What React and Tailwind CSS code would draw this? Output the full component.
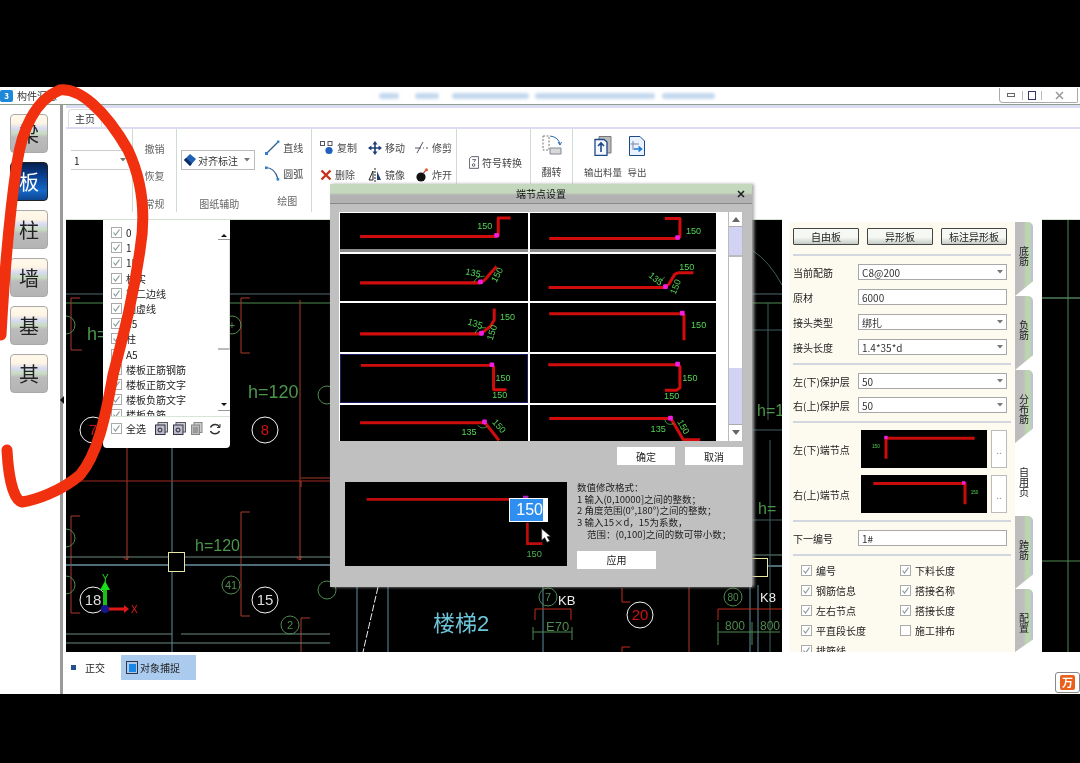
import React from "react";

const FONT = "[font-family:'Noto_Sans_CJK_SC','Liberation_Sans',sans-serif]";

function Tick({ on = true, cls = "" }) {
  return (
    <span className={`inline-flex h-[11px] w-[11px] shrink-0 items-center justify-center border border-[#aaa] bg-white ${cls}`}>
      {on && (
        <svg width="9" height="9" viewBox="0 0 9 9" fill="none">
          <path d="M1.5 4.5 L3.5 7 L7.5 1.5" stroke="#8a9a9a" strokeWidth="1.2" />
        </svg>
      )}
    </span>
  );
}

function Caret({ color = "#777" }) {
  return (
    <svg width="6" height="4" viewBox="0 0 6 4" className="shrink-0">
      <path d="M0 0 H6 L3 3.5 Z" fill={color} />
    </svg>
  );
}

const GREEN = "#55d655";

function Bar({ pts, w = 9 }) {
  return <polyline points={pts} fill="none" stroke="#d00c0c" strokeWidth={w} strokeLinejoin="round" />;
}
function Dot({ x, y, s = 14 }) {
  return <rect x={x - s / 2} y={y - s / 2} width={s} height={s} rx="3" fill="#f01ee0" />;
}
function Num({ x, y, r, t = "150", s = 27 }) {
  return (
    <text x={x} y={y} fontSize={s} fill={GREEN} fontFamily="'Liberation Sans',sans-serif" transform={r ? `rotate(${r} ${x} ${y})` : undefined}>
      {t}
    </text>
  );
}

const CELLS = [
  { vb: "30 40 562 110", pts: "90,112 498,112 503,108 503,55 540,55", dot: [498, 108], nums: [{ x: 440, y: 90 }] },
  { vb: "600 40 555 110", pts: "657,118 1040,118 1045,112 1045,57 1000,57", dot: [1038, 115], nums: [{ x: 1063, y: 105 }] },
  { vb: "30 160 562 140", pts: "90,246 445,246 460,240 498,197", dot: [450, 243], nums: [{ x: 404, y: 220, r: 12, t: "135" }, { x: 497, y: 246, r: -62 }], arc: "M430,244 Q438,226 462,226" },
  { vb: "600 160 555 140", pts: "655,260 1000,260 1012,250 1030,220 1040,216 1085,216", dot: [1002, 257], nums: [{ x: 1043, y: 208 }, { x: 950, y: 226, r: 40, t: "135" }, { x: 1032, y: 282, r: -68 }], arc: "M985,254 Q985,240 1000,228" },
  { vb: "30 311 562 141", pts: "90,400 450,400 480,378 491,360 491,327", dot: [453, 398], nums: [{ x: 508, y: 361 }, { x: 410, y: 372, r: 18, t: "135" }, { x: 486, y: 420, r: -72 }], arc: "M434,398 Q440,380 466,382" },
  { vb: "600 311 555 141", pts: "657,342 1050,342 1057,345 1057,418", dot: [1052, 340], nums: [{ x: 1078, y: 384 }] },
  { vb: "30 460 562 145", sel: true, pts: "90,492 485,492 491,497 491,567 530,567", dot: [486, 490], nums: [{ x: 497, y: 540 }, { x: 487, y: 594 }] },
  { vb: "600 460 555 145", pts: "654,492 1038,492 1045,497 1045,560 1035,567 1000,567", dot: [1038, 490], nums: [{ x: 1052, y: 540 }, { x: 998, y: 594 }] },
  { vb: "30 612 562 107", pts: "90,665 460,665 468,670 505,717", dot: [462, 662], nums: [{ x: 393, y: 702, t: "135" }, { x: 484, y: 664, r: 48 }], arc: "M442,672 Q452,686 470,676" },
  { vb: "600 612 555 107", pts: "657,652 1015,652 1020,655 1055,715 1105,715", dot: [1017, 651], nums: [{ x: 958, y: 692, t: "135" }, { x: 1036, y: 662, r: 60 }], arc: "M1000,656 Q1004,674 1026,668" },
];

function Cell({ c, first }) {
  return (
    <div className={`bg-black ${c.sel ? "border border-[#1a1a6a]" : ""} ${first ? "border-b-[3px] border-b-[#8c8c8c]" : ""}`}>
      <svg viewBox={c.vb} preserveAspectRatio="none" className="block h-full w-full">
        <Bar pts={c.pts} />
        {c.arc && <path d={c.arc} fill="none" stroke={GREEN} strokeWidth="2" />}
        <Dot x={c.dot[0]} y={c.dot[1]} />
        {c.nums.map((n, i) => (
          <Num key={i} {...n} />
        ))}
      </svg>
    </div>
  );
}

function ScrollBar() {
  return (
    <div className="flex h-full w-[15px] flex-col border-x border-[#bbb] bg-white">
      <div className="flex h-[15px] items-center justify-center border-b border-[#aaa] bg-white">
        <svg width="8" height="5" viewBox="0 0 8 5"><path d="M0 5 L4 0 L8 5 Z" fill="#666" /></svg>
      </div>
      <div className="h-[30px] border-b-2 border-b-[#bbb] bg-[#d2d2f4]" />
      <div className="h-[111px] bg-white" />
      <div className="h-[56px] bg-[#d2d2f4]" />
      <div className="flex h-[15px] items-center justify-center border-t border-[#aaa] bg-white">
        <svg width="8" height="5" viewBox="0 0 8 5"><path d="M0 0 L4 5 L8 0 Z" fill="#666" /></svg>
      </div>
    </div>
  );
}

function DlgBtn({ children, cls = "w-[58px]" }) {
  return (
    <div className={`flex h-[18px] items-center justify-center bg-white text-[10px] text-[#222] ${cls}`}>{children}</div>
  );
}

function Dialog() {
  return (
    <div className={`absolute left-[330px] top-[184px] flex h-[403px] w-[422px] flex-col bg-[#c0c0c0] shadow-[2px_0_3px_#aaa] ${FONT}`}>
      <div className="relative flex h-[20px] shrink-0 items-center justify-center border-b border-[#888] bg-[linear-gradient(#c3d8bc_0%,#c3d8bc_45%,#b2b2b2_60%,#b2b2b2_100%)] text-[10px] text-[#111]">
        端节点设置
        <svg width="8" height="8" viewBox="0 0 8 8" className="absolute right-[7px] top-[6px]">
          <path d="M1 1 L7 7 M7 1 L1 7" stroke="#222" strokeWidth="1.6" />
        </svg>
      </div>
      <div className="ml-[9px] mt-[8px] flex h-[229px] w-[404px] shrink-0 bg-white">
        <div className="grid h-full w-[377px] grid-cols-[188px_187px] grid-rows-[39px_47px_49px_49px_36px] gap-x-[2px] gap-y-[2px] overflow-hidden p-px">
          {CELLS.map((c, i) => (
            <Cell key={i} c={c} first={i < 2} />
          ))}
        </div>
        <div className="w-[12px]" />
        <ScrollBar />
      </div>
      <div className="mt-[6px] flex shrink-0 justify-end gap-[10px] pr-[9px]">
        <DlgBtn>确定</DlgBtn>
        <DlgBtn>取消</DlgBtn>
      </div>
      <div className="mt-[17px] flex pl-[15px]">
        <div className="relative h-[84px] w-[222px] shrink-0 bg-black">
          <svg viewBox="45 125 667 252" className="block h-full w-full">
            <polyline points="110,177 540,177" stroke="#c00c0c" strokeWidth="8" fill="none" />
            <polyline points="593,247 593,310 638,310" stroke="#c00c0c" strokeWidth="8" fill="none" />
            <rect x="580" y="166" width="16" height="10" fill="#b020c0" />
            <text x="590" y="350" fontSize="28" fill="#4fae4f" fontFamily="'Liberation Sans',sans-serif">150</text>
            <path d="M636,265 L636,300 L645,292 L652,306 L660,302 L652,289 L662,288 Z" fill="#fff" stroke="#333" strokeWidth="2" />
          </svg>
          <div className="absolute left-[164px] top-[16px] flex h-[24px] w-[39px] items-center bg-white pl-[1px]">
            <span className="flex h-[22px] w-[33px] items-center justify-end bg-[#2f8ff0] text-[16px] text-white [font-family:'Liberation_Sans',sans-serif]">150</span>
          </div>
        </div>
        <div className="ml-[10px] flex flex-col text-[9.5px] leading-[11.7px] text-[#222]">
          <span>数值修改格式：</span>
          <span>1 输入(0,10000]之间的整数；</span>
          <span>2 角度范围(0°,180°)之间的整数；</span>
          <span>3 输入15×d，15为系数，</span>
          <span className="pl-[10px]">范围：(0,100]之间的数可带小数；</span>
          <DlgBtn cls="mt-[10px] w-[79px]">应用</DlgBtn>
        </div>
      </div>
    </div>
  );
}

function SideBtn({ t, active }) {
  return (
    <div
      className={`flex h-[39px] w-[38px] items-center justify-center rounded-[4px] border text-[20px] leading-none ${
        active
          ? "border-[#222] bg-[linear-gradient(#06204c_0%,#0a3f92_35%,#1468c8_75%,#0e4590_100%)] text-white"
          : "border-[#aaa] bg-[linear-gradient(#fff8ea_0%,#fff5e4_22%,#d8daf2_36%,#c8dcc0_50%,#bcbcbc_60%,#b4b4b4_100%)] text-[#222]"
      }`}
    >
      {t}
    </div>
  );
}

function Group({ w, children, last }) {
  return <div className={`${w} h-[83px] shrink-0 ${last ? "" : "border-r border-[#cfdccf]"}`}>{children}</div>;
}

function Row({ icon, t, cls = "" }) {
  return (
    <div className={`flex h-[27px] items-center gap-[3px] whitespace-nowrap ${cls}`}>
      {icon}
      <span>{t}</span>
    </div>
  );
}

const Ico = {
  copy: (
    <svg width="14" height="14" viewBox="0 0 14 14" fill="none">
      <rect x="0.5" y="0.5" width="4" height="4" stroke="#556" />
      <rect x="8" y="0.5" width="4" height="4" stroke="#556" />
      <circle cx="9" cy="9.5" r="3.6" fill="#1f5fc0" />
    </svg>
  ),
  move: (
    <svg width="14" height="14" viewBox="0 0 14 14" fill="#1c3e72">
      <path d="M7 0 L9.5 3.4 H7.8 V6.2 H10.6 V4.5 L14 7 L10.6 9.5 V7.8 H7.8 V10.6 H9.5 L7 14 L4.5 10.6 H6.2 V7.8 H3.4 V9.5 L0 7 L3.4 4.5 V6.2 H6.2 V3.4 H4.5 Z" />
    </svg>
  ),
  trim: (
    <svg width="14" height="14" viewBox="0 0 14 14" fill="none" stroke="#556">
      <path d="M2 12 L8 1" />
      <path d="M0 7 H6" />
      <path d="M8 7 H9 M11 7 H13" />
    </svg>
  ),
  del: (
    <svg width="12" height="12" viewBox="0 0 12 12">
      <path d="M1.5 1.5 L10.5 10.5 M10.5 1.5 L1.5 10.5" stroke="#c8321e" strokeWidth="2.4" />
    </svg>
  ),
  mirror: (
    <svg width="14" height="14" viewBox="0 0 14 14" fill="none">
      <path d="M1 12 L5 3 V12 Z" stroke="#222" />
      <path d="M9 3 L13 12 H9 Z" fill="#1c3e72" />
      <path d="M7 0 V14" stroke="#222" strokeDasharray="2 1" />
    </svg>
  ),
  bomb: (
    <svg width="14" height="14" viewBox="0 0 14 14">
      <circle cx="6" cy="9" r="4.6" fill="#111" />
      <path d="M8.5 5 L11 2" stroke="#b46" strokeWidth="1.2" />
      <circle cx="11.5" cy="1.8" r="1.5" fill="#e05a20" />
    </svg>
  ),
  line: (
    <svg width="15" height="15" viewBox="0 0 15 15">
      <path d="M1.5 13.5 L13 2" stroke="#2a5a8a" strokeWidth="1.2" />
      <rect x="0" y="12" width="3" height="3" fill="#2f7fd0" />
      <rect x="12" y="0.5" width="2.4" height="2.4" fill="#2f7fd0" />
    </svg>
  ),
  arc: (
    <svg width="15" height="15" viewBox="0 0 15 15" fill="none">
      <path d="M1 1.5 Q10 2 13 13" stroke="#2a5a8a" strokeWidth="1.2" />
      <rect x="0" y="0.5" width="2.6" height="2.6" fill="#2f7fd0" />
      <rect x="11.6" y="12" width="2.6" height="2.6" fill="#2f7fd0" />
    </svg>
  ),
  sym: (
    <svg width="10" height="15" viewBox="0 0 12 15" fill="none" stroke="#445">
      <path d="M3 0.5 H11.5 V14.5 H0.5 V3 Z" />
      <circle cx="5.5" cy="10.5" r="1.6" />
      <path d="M4 4 H8 L6 7" />
    </svg>
  ),
  flip: (
    <svg width="20" height="20" viewBox="0 0 20 20" fill="none" stroke="#2b6cb0">
      <path d="M1 1 H7 V15 H1 Z" strokeDasharray="2 1.5" stroke="#777" />
      <path d="M8 1 Q17 2 18 10 M18 10 L16 7 M18 10 L19.5 7" />
      <path d="M8 13 H19 V19 H8 Z" fill="#d8d8d8" stroke="#889" />
    </svg>
  ),
  out: (
    <svg width="18" height="20" viewBox="0 0 18 20">
      <path d="M5 0.5 H17 V17 H5 Z" fill="#bbb" stroke="#777" />
      <path d="M1 3.5 H10 L13 6 V19.5 H1 Z" fill="#f6f8ff" stroke="#1c4a86" strokeWidth="1.3" />
      <path d="M7 7 V16 M4 10 L7 7 L10 10" fill="none" stroke="#1c4a86" strokeWidth="1.6" />
    </svg>
  ),
  exp: (
    <svg width="16" height="20" viewBox="0 0 16 20">
      <path d="M0.5 0.5 H11 L15.5 5 V19.5 H0.5 Z" fill="#eaf2ff" stroke="#1c4a86" />
      <path d="M4 5 V14 M1.5 8 H10" stroke="#7a8aa0" />
      <path d="M5 13 H12 M9.5 10.5 L12.5 13 L9.5 15.5" fill="none" stroke="#1c7ad0" strokeWidth="1.6" />
    </svg>
  ),
};

function Ribbon() {
  return (
    <div className="flex h-[115px] shrink-0 flex-col border-b border-[#d4e2d0] bg-white text-[10px] text-[#4a4a4a]">
      <div className="h-[3px] shrink-0 bg-[#dcdcf4]" />
      <div className="flex h-[21px] shrink-0 items-end border-b-[2px] border-b-[#dcdcf4]">
        <div className="ml-[2px] flex h-[18px] w-[34px] items-center justify-center rounded-t border border-b-0 border-[#ddd] text-[#333]">主页</div>
      </div>
      <div className="flex h-[85px]">
        <Group w="w-[67px]">
          <div className="ml-[5px] mt-[21px] flex h-[20px] w-[58px] items-center justify-between border-y border-[#ccc] pl-[3px] pr-[3px] text-[#222]">
            1<Caret />
          </div>
        </Group>
        <Group w="w-[44px]">
          <div className="flex flex-col items-center pt-[6px] text-[#666]">
            <div className="flex h-[27px] items-center">撤销</div>
            <div className="flex h-[27px] items-center">恢复</div>
            <div className="mt-[2px] flex h-[24px] items-center whitespace-nowrap">常规</div>
          </div>
        </Group>
        <Group w="w-[135px]">
          <div className="flex h-full">
            <div className="w-[85px]">
              <div className="ml-[4px] mt-[21px] flex h-[20px] w-[74px] items-center gap-[2px] border border-[#bbb] pl-[2px] pr-[4px] text-[#333]">
                <svg width="12" height="12" viewBox="0 0 12 12" className="shrink-0">
                  <path d="M6 0 L12 5 L6 12 L0 6 Z" fill="#1f5fb4" />
                  <path d="M0 6 L6 12 L8 9.5 L2 4 Z" fill="#0c2c60" />
                </svg>
                <span className="whitespace-nowrap">对齐标注</span>
                <span className="ml-auto"><Caret /></span>
              </div>
              <div className="mt-[26px] text-center text-[#666]">图纸辅助</div>
            </div>
            <div className="flex w-[50px] flex-col pl-[4px] pt-[6px]">
              <Row icon={Ico.line} t="直线" />
              <Row icon={Ico.arc} t="圆弧" />
              <div className="mt-[2px] flex h-[24px] items-center pl-[12px] text-[#666]">绘图</div>
            </div>
          </div>
        </Group>
        <Group w="w-[145px]">
          <div className="grid grid-cols-[48px_47px_47px] pl-[8px] pt-[5px]">
            <Row icon={Ico.copy} t="复制" />
            <Row icon={Ico.move} t="移动" />
            <Row icon={Ico.trim} t="修剪" />
            <Row icon={Ico.del} t="删除" />
            <Row icon={Ico.mirror} t="镜像" />
            <Row icon={Ico.bomb} t="炸开" />
          </div>
        </Group>
        <Group w="w-[74px]">
          <div className="flex h-full items-start pl-[12px] pt-[20px]">
            <Row icon={Ico.sym} t="符号转换" cls="text-[#444]" />
          </div>
        </Group>
        <Group w="w-[42px]">
          <div className="flex flex-col items-center pt-[6px]">
            {Ico.flip}
            <span className="mt-[9px]">翻转</span>
          </div>
        </Group>
        <Group w="w-[90px]" last>
          <div className="flex pl-[8px] pt-[7px] text-[9.5px]">
            <div className="flex w-[44px] flex-col items-center">
              {Ico.out}
              <span className="mt-[9px] whitespace-nowrap">输出料量</span>
            </div>
            <div className="flex w-[24px] flex-col items-center">
              {Ico.exp}
              <span className="mt-[9px] whitespace-nowrap">导出</span>
            </div>
          </div>
        </Group>
      </div>
    </div>
  );
}

function Ci({ x, y, r = 13, c = "#f4f4f4", t, tc = "#d01010", s = 15 }) {
  return (
    <g>
      <circle cx={x} cy={y} r={r} fill="none" stroke={c} strokeWidth="1" />
      {t && (
        <text x={x} y={y + s * 0.36} fontSize={s} fill={tc} textAnchor="middle" fontFamily="'Liberation Sans',sans-serif">
          {t}
        </text>
      )}
    </g>
  );
}
function Lab({ x, y, t, c = "#4c964c", s = 17 }) {
  return (
    <text x={x} y={y} fontSize={s} fill={c} fontFamily="'Liberation Sans','Noto Sans CJK SC',sans-serif">
      {t}
    </text>
  );
}

function Cad() {
  const R = "#a83a2a";
  const T = "#5c8ea0";
  const G = "#4f8a4f";
  const W = "#6a8a80";
  return (
    <svg viewBox="66 220 1014 432" className="block h-[432px] w-[1014px]" fill="none">
      <path d="M66 294 H782 M1042 298 H1080" stroke="#4a6a70" />
      <path d="M66 303 H782 M1042 298 H1080 M1042 561 H1080" stroke={G} />
      <path d="M1068 220 V652" stroke={G} />
      <path d="M172 220 V652 M357 585 V652 M388 585 V652 M543 585 V652 M750 585 V652 M758 585 V652" stroke={T} />
      <path d="M80 298 H71 V350 H82 M250 298 H241 V353 H250 M300 300 V560 M127 447 V560" stroke={R} />
      <path d="M66 481 H330" stroke="#a02a20" />
      <path d="M301 481 V487 M301 478 H330" stroke={R} />
      <path d="M250 512 H241 V616 H250 M71 516 H80 M71 516 V613 H80 M310 618 H301 V652" stroke={R} />
      <path d="M66 557 H330 M66 634 H172 M181 634 H330 M66 643 H330 M752 555 H782" stroke={W} />
      <path d="M66 565 H330 M752 566 H782" stroke="#516a78" strokeWidth="2" />
      <path d="M123 557 L127 560 L129 556 M296 557 L300 560 L302 556" stroke={R} />
      <path d="M752 250 Q770 262 782 285 M752 330 H782 M768 303 V420 M752 430 H782 M770 440 V652 M752 520 H782" stroke="#3f5f5f" />
      <Lab x={248} y={398} t="h=120" s={18} />
      <Lab x={87} y={340} t="h=" s={18} />
      <Lab x={195} y={551} t="h=120" s={16} />
      <Lab x={757} y={416} t="h=10" s={16} />
      <Lab x={758} y={514} t="h=" s={16} />
      <Ci x={93} y={430} t="7" />
      <Ci x={265} y={430} t="8" />
      <Ci x={93} y={600} t="18" tc="#ddd" />
      <Ci x={265} y={600} t="15" tc="#ddd" />
      <Ci x={231} y={585} r={9} c={G} t="41" tc={G} s={11} />
      <Ci x={290} y={625} r={9} c={G} t="2" tc={G} s={11} />
      <Ci x={232} y={325} r={9} c={G} t="+" tc={G} s={11} />
      <Ci x={66} y={325} r={9} c={G} />
      <Ci x={66} y={538} r={9} c={G} />
      <Ci x={66} y={585} r={9} c={G} />
      <Ci x={327} y={395} r={9} c={G} />
      <Ci x={327} y={590} r={9} c={G} />
      <rect x="168.5" y="552.5" width="16" height="19" fill="#000" stroke="#e8e8a0" />
      <rect x="750.5" y="558.5" width="17" height="18" fill="#000" stroke="#e8e8a0" />
      <path d="M105 608 V588" stroke="#18c018" strokeWidth="4" />
      <path d="M100 590 L105 581 L110 590 Z" fill="#18e018" />
      <path d="M105 609 H125" stroke="#e01818" strokeWidth="3" />
      <path d="M124 605 L129 609 L124 613 Z" fill="#e01818" />
      <circle cx="105" cy="609" r="4" fill="#16168c" />
      <Lab x={102} y={582} t="Y" c="#20d020" s={10} />
      <Lab x={131} y={613} t="X" c="#e02020" s={10} />
      <path d="M378 587 L363 652" stroke="#eee" strokeDasharray="7 2" />
      <Lab x={433} y={631} t="楼梯2" c="#6ec4d8" s={22} />
      <Ci x={548} y={597} r={9} c={G} t="7" tc={G} s={11} />
      <Lab x={558} y={605} t="KB" c="#eee" s={13} />
      <path d="M535 620 V609 H571 V620 M622 588 V602 H630 M622 652 V647 H630" stroke="#c02a1a" />
      <Lab x={546} y={631} t="E70" c={G} s={13} />
      <path d="M533 632 H572 M533 627 L533 640 M572 627 V640 M718 632 H780 M718 622 V645 M752 622 V645" stroke={G} />
      <Ci x={640} y={615} t="20" />
      <path d="M689 587 V652" stroke={R} />
      <Ci x={733} y={597} r={9} c={G} t="80" tc={G} s={10} />
      <Lab x={760} y={602} t="K8" c="#eee" s={13} />
      <path d="M718 620 V609 H782" stroke="#c02a1a" />
      <Lab x={725} y={630} t="800" c={G} s={12} />
      <Lab x={760} y={630} t="800" c={G} s={12} />
    </svg>
  );
}

const LAYERS = ["0", "1", "1B", "柱实", "梁二边线", "轴虚线", "a5", "柱", "A5", "楼板正筋钢筋", "楼板正筋文字", "楼板负筋文字", "楼板负筋"];

function LayerPanel() {
  return (
    <div className={`absolute left-[103px] top-[220px] flex h-[228px] w-[127px] flex-col overflow-hidden rounded-b-[4px] bg-white text-[10px] text-[#222] ${FONT}`}>
      <div className="flex h-[197px] border-b border-[#d8e4d8]">
        <div className="h-full flex-1 overflow-hidden pl-[8px] pt-[5px]">
          {LAYERS.map((l) => (
            <div key={l} className="flex h-[15.2px] items-center gap-[4px] whitespace-nowrap">
              <Tick />
              <span>{l}</span>
            </div>
          ))}
        </div>
        <div className="flex h-full w-[12px] flex-col pt-[12px]">
          <div className="flex h-[8px] items-center justify-center border-b border-[#999]"><svg width="6" height="3" viewBox="0 0 6 3"><path d="M0 3 L3 0 L6 3 Z" fill="#111" /></svg></div>
          <div className="h-[110px] border-b-2 border-b-[#bbb] border-r border-[#ddd]" />
          <div className="flex-1" />
          <div className="flex h-[12px] items-center justify-center border-b border-[#999]"><svg width="6" height="3" viewBox="0 0 6 3"><path d="M0 0 L3 3 L6 0 Z" fill="#111" /></svg></div>
          <div className="h-[5px]" />
        </div>
      </div>
      <div className="flex flex-1 items-center gap-[4px] pl-[8px] pb-[8px]">
        <Tick />
        <span className="mr-[5px]">全选</span>
        {[0, 1].map((i) => (
          <svg key={i} width="13" height="13" viewBox="0 0 13 13" className="mr-[1px]">
            <rect x="3" y="0.5" width="9.5" height="9.5" fill="#ccc" stroke="#556" />
            <rect x="0.5" y="3" width="9.5" height="9.5" fill="#bbc" stroke="#334" />
            <circle cx="5" cy="8" r="2" fill="none" stroke="#223" />
          </svg>
        ))}
        <svg width="12" height="13" viewBox="0 0 12 13" className="mr-[2px]">
          <rect x="3" y="0.5" width="8" height="10" fill="#ccc" stroke="#888" />
          <rect x="0.5" y="3" width="8" height="9.5" fill="#bbb" stroke="#888" />
          <path d="M2 6 H7 M2 8 H7 M2 10 H7" stroke="#777" />
        </svg>
        <svg width="12" height="12" viewBox="0 0 12 12" fill="none" stroke="#333" strokeWidth="1.5">
          <path d="M10.5 4 A5 5 0 0 0 1.5 4.5 M1.5 8 A5 5 0 0 0 10.5 8" />
          <path d="M11 1 V4.5 H8" strokeWidth="1" />
        </svg>
      </div>
    </div>
  );
}

function Sep({ cls }) {
  return <div className={`h-[2px] w-full shrink-0 bg-[#d2d6de] ${cls}`} />;
}
function PBtn({ t }) {
  return (
    <div className="flex h-[17px] w-[66px] items-center justify-center rounded-[1px] border border-[#444] bg-[linear-gradient(#f6f8f4_0%,#f6f8f4_55%,#c4ccc4_100%)] whitespace-nowrap">
      {t}
    </div>
  );
}
function PRow({ label, value, select, cls = "" }) {
  return (
    <div className={`flex h-[16px] shrink-0 items-center ${cls}`}>
      <span className="w-[65px] whitespace-nowrap">{label}</span>
      <div className="flex h-[16px] w-[149px] items-center justify-between border border-[#a8a8a8] bg-white px-[3px] text-[#333]">
        <span>{value}</span>
        {select && <Caret />}
      </div>
    </div>
  );
}
function PNode({ label, vb, pts, dot, num, cls = "" }) {
  return (
    <div className={`flex h-[38px] shrink-0 items-center ${cls}`}>
      <span className="w-[68px] whitespace-nowrap">{label}</span>
      <div className="h-[38px] w-[126px] bg-black">
        <svg viewBox={vb} className="block h-full w-full">
          <polyline points={pts} fill="none" stroke="#c80c0c" strokeWidth="9" />
          <rect x={dot[0] - 5} y={dot[1] - 5} width="10" height="10" fill="#f01ee0" />
          <text x={num[0]} y={num[1]} fontSize="14" fill={GREEN} fontFamily="'Liberation Sans',sans-serif">150</text>
        </svg>
      </div>
      <div className="ml-[4px] flex h-[38px] w-[16px] items-center justify-center border border-[#bbb] bg-white text-[#888]">..</div>
    </div>
  );
}
function Chk({ t, on = true }) {
  return (
    <div className="flex h-[20px] items-center gap-[4px] whitespace-nowrap">
      <Tick on={on} />
      <span>{t}</span>
    </div>
  );
}
function VTab({ t, h, active }) {
  return (
    <div
      className={`flex w-[18px] shrink-0 justify-center rounded-tr-[5px] pt-[24px] text-[10px] text-[#222] [clip-path:polygon(0_0,100%_0,100%_80%,0_100%)] ${h} ${
        active
          ? "bg-white"
          : "bg-[linear-gradient(90deg,#bdbdbd_0%,#bdbdbd_45%,#bcd4b0_62%,#bcd4b0_82%,#bcbcdc_100%)]"
      }`}
    >
      <span className="[writing-mode:vertical-rl]">{t}</span>
    </div>
  );
}

function RightPanel() {
  return (
    <div className={`absolute left-[782px] top-[215px] flex h-[437px] w-[260px] overflow-hidden bg-white pl-[7px] pt-[7px] text-[10px] text-[#222] ${FONT}`}>
      <div className="flex h-[430px] w-[226px] shrink-0 flex-col overflow-hidden rounded-tl-[4px] bg-[#fdfbf0] px-[4px] pt-[6px]">
        <div className="flex shrink-0 gap-[8px]">
          <PBtn t="自由板" />
          <PBtn t="异形板" />
          <PBtn t="标注异形板" />
        </div>
        <Sep cls="mt-[9px]" />
        <PRow cls="mt-[8px]" label="当前配筋" value="C8@200" select />
        <PRow cls="mt-[9px]" label="原材" value="6000" />
        <PRow cls="mt-[9px]" label="接头类型" value="绑扎" select />
        <PRow cls="mt-[9px]" label="接头长度" value="1.4*35*d" select />
        <Sep cls="mt-[8px]" />
        <PRow cls="mt-[8px]" label="左(下)保护层" value="50" select />
        <PRow cls="mt-[8px]" label="右(上)保护层" value="50" select />
        <Sep cls="mt-[8px]" />
        <PNode cls="mt-[7px]" label="左(下)端节点" vb="243 6 378 113" pts="318,92 318,30 584,30" dot={[318, 28]} num={[276, 60]} />
        <PNode cls="mt-[7px]" label="右(上)端节点" vb="243 143 378 113" pts="280,168 555,168 555,230" dot={[551, 166]} num={[572, 198]} />
        <Sep cls="mt-[7px]" />
        <PRow cls="mt-[8px]" label="下一编号" value="1#" />
        <Sep cls="mt-[8px]" />
        <div className="mt-[4px] grid shrink-0 grid-cols-[99px_1fr] pl-[8px]">
          <Chk t="编号" />
          <Chk t="下料长度" />
          <Chk t="钢筋信息" />
          <Chk t="搭接名称" />
          <Chk t="左右节点" />
          <Chk t="搭接长度" />
          <Chk t="平直段长度" />
          <Chk t="施工排布" on={false} />
          <Chk t="排筋线" />
        </div>
      </div>
      <div className="flex h-[430px] flex-col">
        <VTab t="底筋" h="h-[74px]" />
        <VTab t="负筋" h="h-[74px]" />
        <VTab t="分布筋" h="h-[73px]" />
        <VTab t="自用页" h="h-[73px]" active />
        <VTab t="跨筋" h="h-[73px]" />
        <VTab t="配置" h="h-[63px]" />
      </div>
    </div>
  );
}

function TitleBar() {
  const blobs = ["w-[20px] ml-[322px]", "w-[24px] ml-[16px]", "w-[77px] ml-[13px]", "w-[120px] ml-[6px]", "w-[53px] ml-[7px]"];
  return (
    <div className="relative flex h-[18px] shrink-0 items-center border-b border-[#8fa08f] bg-white">
      <div className="flex h-[12px] w-[13px] items-center justify-center rounded-[2px] bg-[#1e88d8] text-[8px] font-bold text-white">3</div>
      <span className={`ml-[4px] text-[10px] text-[#333] ${FONT}`}>构件汇总</span>
      <div className="flex">
        {blobs.map((b, i) => (
          <span key={i} className={`h-[6px] rounded-full bg-[#c4d8ee] blur-[1.5px] ${b}`} />
        ))}
      </div>
      <div className="ml-auto mr-[2px] flex h-[15px] w-[79px] items-center rounded-bl-[4px] rounded-br-[2px] border-b border-l border-r border-[#aaa]">
        <div className="flex w-[22px] items-center justify-center">
          <span className="h-[4px] w-[8px] border border-[#666]" />
        </div>
        <div className="flex w-[20px] items-center justify-center border-x border-[#bbb]">
          <span className="flex h-[9px] w-[8px] items-center justify-center border border-[#336] text-[6px]" />
        </div>
        <div className="flex flex-1 items-center justify-center">
          <svg width="9" height="9" viewBox="0 0 9 9"><path d="M1 1 L8 8 M8 1 L1 8" stroke="#999" strokeWidth="1.5" /></svg>
        </div>
      </div>
    </div>
  );
}

function StatusBar() {
  return (
    <div className={`flex h-[42px] items-start bg-white pt-[3px] text-[10px] text-[#222] ${FONT}`}>
      <div className="ml-[5px] mt-[3px] flex h-[19px] items-center">
        <span className="h-[5px] w-[5px] bg-[#23508c]" />
        <span className="ml-[9px]">正交</span>
      </div>
      <div className="ml-[16px] flex h-[25px] w-[75px] items-center gap-[2px] bg-[#aacbee] pl-[5px]">
        <span className="flex h-[13px] w-[12px] items-center justify-center border border-[#334]">
          <span className="h-[8px] w-[7px] bg-[#1788e8]" />
        </span>
        <span className="whitespace-nowrap">对象捕捉</span>
      </div>
      <div className="ml-auto mt-[17px] flex h-[21px] w-[25px] items-center justify-center rounded-[3px] border border-[#888] bg-white">
        <span className="flex h-[15px] w-[15px] items-center justify-center rounded-[2px] bg-[#e8601a] text-[11px] font-bold text-white">万</span>
      </div>
    </div>
  );
}

export default function App() {
  return (
    <div className={`relative h-[763px] w-[1080px] overflow-hidden bg-black ${FONT}`}>
      <div className="relative h-full w-full pt-[87px] blur-[0.5px]">
        <div className="flex h-[607px] flex-col bg-white">
          <TitleBar />
          <div className="flex min-h-0 flex-1">
            <div className="flex w-[60px] shrink-0 flex-col gap-[9px] pl-[10px] pt-[9px]">
              {["梁", "板", "柱", "墙", "基", "其"].map((t) => (
                <SideBtn key={t} t={t} active={t === "板"} />
              ))}
            </div>
            <div className="flex w-[3px] shrink-0 items-center bg-[#9a9a9a]">
              <svg width="4" height="8" viewBox="0 0 4 8" className="shrink-0"><path d="M4 0 V8 L0 4 Z" fill="#111" /></svg>
            </div>
            <div className="flex min-w-0 flex-1 flex-col pl-[3px]">
              <Ribbon />
              <div className="h-[432px] shrink-0 overflow-hidden bg-black">
                <Cad />
              </div>
              <StatusBar />
            </div>
          </div>
        </div>
        <LayerPanel />
        <RightPanel />
        <Dialog />
      </div>
      <svg viewBox="0 0 1080 763" className="pointer-events-none absolute inset-0 h-[763px] w-[1080px]" fill="none">
        <path
          d="M1,335 C4,280 10,210 17,163 C22,130 35,100 60,90 C80,88 105,110 128,150 C142,180 146,215 140,250 C133,300 122,340 113,375 C105,420 97,455 80,475 C60,492 35,500 22,502 C12,500 8,470 7,450"
          stroke="#f0300e"
          strokeWidth="11"
          strokeLinecap="round"
        />
      </svg>
    </div>
  );
}
